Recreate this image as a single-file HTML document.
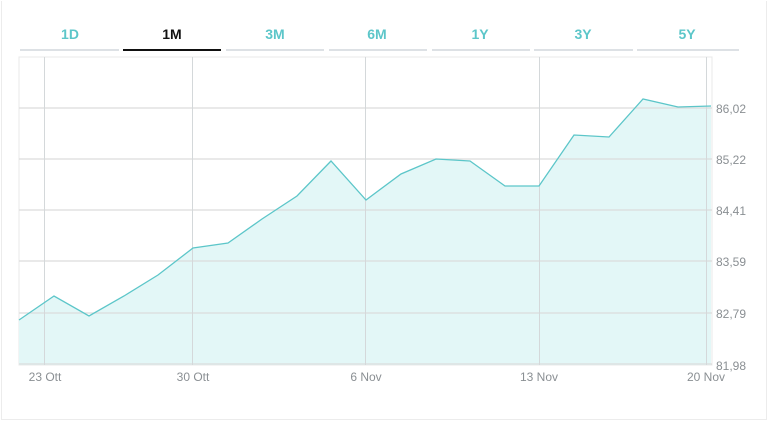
<!DOCTYPE html>
<html><head><style>
html,body{margin:0;padding:0;background:#fff;}
body{width:768px;height:421px;position:relative;overflow:hidden;font-family:"Liberation Sans",sans-serif;}
.frame{position:absolute;left:1px;top:1px;width:764px;height:418px;border:1px solid #ececec;border-top:none;}
</style></head><body>
<div class="frame"></div>
<svg width="768" height="421" style="position:absolute;left:0;top:0" xmlns="http://www.w3.org/2000/svg">
<g font-family="Liberation Sans Narrow, Liberation Sans, sans-serif" font-size="14" font-weight="bold" text-anchor="middle" fill="#5cc6c9">
<text x="70" y="39">1D</text>
<text x="172" y="39" fill="#111">1M</text>
<text x="275" y="39">3M</text>
<text x="377" y="39">6M</text>
<text x="480" y="39">1Y</text>
<text x="583" y="39">3Y</text>
<text x="687" y="39">5Y</text>
</g>
<g stroke="#dde1e5" stroke-width="2">
<line x1="20" y1="50" x2="119" y2="50"/>
<line x1="226" y1="50" x2="324" y2="50"/>
<line x1="329" y1="50" x2="427" y2="50"/>
<line x1="432" y1="50" x2="530" y2="50"/>
<line x1="534" y1="50" x2="633" y2="50"/>
<line x1="637" y1="50" x2="739" y2="50"/>
</g>
<line x1="123" y1="50" x2="221" y2="50" stroke="#111" stroke-width="2"/>
<rect x="19" y="57" width="693" height="308" fill="none" stroke="#e8e8e8"/>
<polygon points="19,320 54,296 89,316 124,296 158,275 193,248 228,243 262,219 297,196 331,161 366,200 401,174 436,159 470,161 505,186 539,186 574,135 609,137 643,99 678,107 711,106 711,365 19,365" fill="#e3f7f7"/>
<g stroke="#dcdcdc" stroke-width="1.3">
<line x1="19" y1="108" x2="712" y2="108"/>
<line x1="19" y1="159" x2="712" y2="159"/>
<line x1="19" y1="210" x2="712" y2="210"/>
<line x1="19" y1="261" x2="712" y2="261"/>
<line x1="19" y1="313" x2="712" y2="313"/>
<line x1="19" y1="364" x2="712" y2="364"/>
</g>
<g stroke="#d4d8da" stroke-width="1">
<line x1="44.5" y1="57" x2="44.5" y2="365"/>
<line x1="192.5" y1="57" x2="192.5" y2="365"/>
<line x1="365.5" y1="57" x2="365.5" y2="365"/>
<line x1="539.5" y1="57" x2="539.5" y2="365"/>
<line x1="706.5" y1="57" x2="706.5" y2="365"/>
</g>
<polyline points="19,320 54,296 89,316 124,296 158,275 193,248 228,243 262,219 297,196 331,161 366,200 401,174 436,159 470,161 505,186 539,186 574,135 609,137 643,99 678,107 711,106" fill="none" stroke="#5cc6c9" stroke-width="1.3"/>
<g font-family="Liberation Sans, sans-serif" font-size="12" fill="#8a8f93">
<text x="716" y="113">86,02</text>
<text x="716" y="164">85,22</text>
<text x="716" y="215">84,41</text>
<text x="716" y="266">83,59</text>
<text x="716" y="318">82,79</text>
<text x="716" y="370">81,98</text>
</g>
<g font-family="Liberation Sans, sans-serif" font-size="12" fill="#8a8f93" text-anchor="middle">
<text x="45" y="381">23 Ott</text>
<text x="193" y="381">30 Ott</text>
<text x="366" y="381">6 Nov</text>
<text x="539" y="381">13 Nov</text>
<text x="706" y="381">20 Nov</text>
</g>
</svg>
</body></html>
